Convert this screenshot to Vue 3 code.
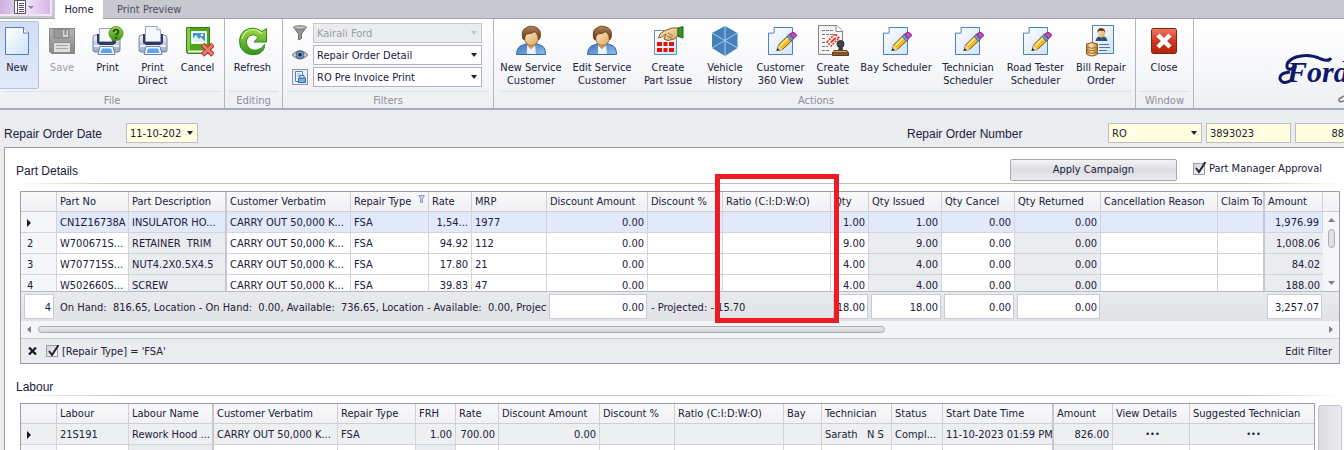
<script setup>
import { ref } from 'vue'

const fileActions = [
  { icon: 'new', lines: ['New'], width: 44, active: true },
  { icon: 'save', lines: ['Save'], width: 46, disabled: true },
  { icon: 'printq', lines: ['Print'], width: 45 },
  { icon: 'print', lines: ['Print', 'Direct'], width: 45 },
  { icon: 'cancel', lines: ['Cancel'], width: 45 },
]
const mainActions = [
  { icon: 'person', lines: ['New Service', 'Customer'], width: 68 },
  { icon: 'person', lines: ['Edit Service', 'Customer'], width: 74 },
  { icon: 'issue', lines: ['Create', 'Part Issue'], width: 58 },
  { icon: 'cube', lines: ['Vehicle', 'History'], width: 56 },
  { icon: 'edit', lines: ['Customer', '360 View'], width: 55 },
  { icon: 'stamp', lines: ['Create', 'Sublet'], width: 50 },
  { icon: 'edit', lines: ['Bay Scheduler'], width: 76 },
  { icon: 'edit', lines: ['Technician', 'Scheduler'], width: 68 },
  { icon: 'edit', lines: ['Road Tester', 'Scheduler'], width: 67 },
  { icon: 'bill', lines: ['Bill Repair', 'Order'], width: 64 },
]
const groups = [
  { name: 'File', cls: 'g-file', actions: fileActions },
  { name: 'Editing', cls: 'g-editing', actions: [{ icon: 'refresh', lines: ['Refresh'], width: 55 }] },
]
const filters = [
  { icon: 'funnel', label: 'Dealer', value: 'Kairali Ford', disabled: true },
  { icon: 'eye', label: 'View', value: 'Repair Order Detail' },
  { icon: 'report', label: 'Report', value: 'RO Pre Invoice Print' },
]

const partCols = [
  { t: '', w: 36 },
  { t: 'Part No', w: 72 },
  { t: 'Part Description', w: 98, fixed: true, ro: true },
  { t: 'Customer Verbatim', w: 124 },
  { t: 'Repair Type', w: 78, filter: true },
  { t: 'Rate', w: 43, num: true },
  { t: 'MRP', w: 75 },
  { t: 'Discount Amount', w: 101, num: true },
  { t: 'Discount %', w: 75 },
  { t: 'Ratio (C:I:D:W:O)', w: 108, mark: true },
  { t: 'Qty', w: 38, num: true },
  { t: 'Qty Issued', w: 73, num: true, ro: true },
  { t: 'Qty Cancel', w: 73, num: true },
  { t: 'Qty Returned', w: 86, num: true, ro: true },
  { t: 'Cancellation Reason', w: 117 },
  { t: 'Claim To', w: 47, fixed: true },
  { t: 'Amount', w: 58, num: true, ro: true },
]
const verb = 'CARRY OUT 50,000 K...'
const partRows = [
  ['', 'CN1Z16738A', 'INSULATOR HO...', verb, 'FSA', '1,54...', '1977', '0.00', '', '', '1.00', '1.00', '0.00', '0.00', '', '', '1,976.99'],
  ['2', 'W700671S...', 'RETAINER  TRIM', verb, 'FSA', '94.92', '112', '0.00', '', '', '9.00', '9.00', '0.00', '0.00', '', '', '1,008.06'],
  ['3', 'W707715S...', 'NUT4.2X0.5X4.5', verb, 'FSA', '17.80', '21', '0.00', '', '', '4.00', '4.00', '0.00', '0.00', '', '', '84.02'],
  ['4', 'W502660S...', 'SCREW', verb, 'FSA', '39.83', '47', '0.00', '', '', '4.00', '4.00', '0.00', '0.00', '', '', '188.00'],
]
const stock = 'On Hand:  816.65, Location - On Hand:  0.00, Available:  736.65, Location - Available:  0.00, Projecte'
const projected = '- Projected: - 15.70'

const labourCols = [
  { t: '', w: 36 },
  { t: 'Labour', w: 72 },
  { t: 'Labour Name', w: 85, fixed: true, ro: true },
  { t: 'Customer Verbatim', w: 124 },
  { t: 'Repair Type', w: 78 },
  { t: 'FRH', w: 40, num: true, ro: true },
  { t: 'Rate', w: 43, num: true },
  { t: 'Discount Amount', w: 101, num: true },
  { t: 'Discount %', w: 75 },
  { t: 'Ratio (C:I:D:W:O)', w: 109 },
  { t: 'Bay', w: 38 },
  { t: 'Technician', w: 70 },
  { t: 'Status', w: 51 },
  { t: 'Start Date Time', w: 111, fixed: true },
  { t: 'Amount', w: 59, num: true, ro: true },
  { t: 'View Details', w: 77, mid: true },
  { t: 'Suggested Technician', w: 124, mid: true },
]
const labourRow = ['', '21S191', 'Rework Hood ...', verb, 'FSA', '1.00', '700.00', '0.00', '', '', '', 'Sarath   N S', 'Compl...', '11-10-2023 01:59 PM', '826.00', '•••', '•••']

const approved = ref(true)
const filterOn = ref(true)
</script>

<template>
  <div class="app">
    <svg class="defs" aria-hidden="true">
      <defs>
        <linearGradient id="gPage" x1="0" y1="0" x2="1" y2="1"><stop offset="0" stop-color="#fff" /><stop offset="1" stop-color="#cfe3f7" /></linearGradient>
        <linearGradient id="gGray" x1="0" y1="0" x2="0" y2="1"><stop offset="0" stop-color="#b4b4b4" /><stop offset="1" stop-color="#888" /></linearGradient>
        <linearGradient id="gPrn" x1="0" y1="0" x2="0" y2="1"><stop offset="0" stop-color="#f4f6fb" /><stop offset="1" stop-color="#9aa6c2" /></linearGradient>
        <linearGradient id="gBlue" x1="0" y1="0" x2="1" y2="1"><stop offset="0" stop-color="#3a6fc0" /><stop offset="1" stop-color="#8fc0ee" /></linearGradient>
        <linearGradient id="gGreen" x1="0" y1="0" x2="0" y2="1"><stop offset="0" stop-color="#a3d94a" /><stop offset="1" stop-color="#2f9417" /></linearGradient>
        <linearGradient id="gRed" x1="0" y1="0" x2="0" y2="1"><stop offset="0" stop-color="#ec7a62" /><stop offset="0.5" stop-color="#cf3a20" /><stop offset="1" stop-color="#b02208" /></linearGradient>
        <linearGradient id="gSkin" x1="0" y1="0" x2="1" y2="1"><stop offset="0" stop-color="#ffe9c0" /><stop offset="1" stop-color="#dba766" /></linearGradient>
        <linearGradient id="gHair" x1="0" y1="0" x2="0" y2="1"><stop offset="0" stop-color="#b08258" /><stop offset="1" stop-color="#5e3514" /></linearGradient>
        <linearGradient id="gGold" x1="0" y1="0" x2="1" y2="0"><stop offset="0" stop-color="#c58a3c" /><stop offset="0.4" stop-color="#ffe6ac" /><stop offset="1" stop-color="#b87a30" /></linearGradient>
      </defs>
      <symbol id="i-new" viewBox="0 0 32 32">
        <path d="M4.500 2.500H22.500L27.500 8V29.500H4.500Z" fill="url(#gPage)" stroke="#4a82bd" />
        <path d="M22.500 2.500V8H27.500" fill="#fff" stroke="#4a82bd" />
      </symbol>
      <symbol id="i-save" viewBox="0 0 32 32">
        <path d="M3.500 3.500H28.500V28.500H5.500L3.500 26.500Z" fill="url(#gGray)" stroke="#858585" />
        <path d="M8 4H23V13H8Z" fill="#999" stroke="#858585" /><path d="M17 5H22V12H17Z" fill="#d6d6d6" /><path d="M18.500 5H20.500V10H18.500Z" fill="#888" />
        <path d="M7.500 17.500H24.500V27.500H7.500Z" fill="#dedede" stroke="#8d8d8d" /><path d="M10 20.500H22M10 23.500H22" stroke="#a5a5a5" />
      </symbol>
      <symbol id="i-print" viewBox="0 0 32 32">
        <path d="M2 13Q2 10 5 10H27Q30 10 30 13V25Q30 27 28 27H4Q2 27 2 25Z" fill="url(#gPrn)" stroke="#7a86a8" />
        <path d="M6 9H26V18L23 20H9L6 18Z" fill="#33395c" />
        <path d="M8.500 1.500H20L23.500 5V16.500H8.500Z" fill="#f6f8fd" stroke="#9aa5be" /><path d="M20 1.500V5H23.500" fill="#fff" stroke="#9aa5be" />
        <path d="M3 20H29V22H3Z" fill="#fff" opacity="0.7" />
        <path d="M9 21.500H23L25 29.500H7Z" fill="#f2f7ff" stroke="#6e80ad" /><path d="M11 23.500H21L22.500 28H9.500Z" fill="#59a4e8" />
      </symbol>
      <symbol id="i-printq" viewBox="0 0 32 32">
        <path d="M1 13Q1 10 4 10H25Q28 10 28 13V25Q28 27 26 27H3Q1 27 1 25Z" fill="url(#gPrn)" stroke="#7a86a8" />
        <path d="M5 9H24V18L21 20H8L5 18Z" fill="#33395c" /><path d="M7.500 3.500H20V16.500H7.500Z" fill="#f6f8fd" stroke="#9aa5be" />
        <path d="M2 20H27V22H2Z" fill="#fff" opacity="0.7" />
        <path d="M8 21.500H21L23 29.500H6Z" fill="#f2f7ff" stroke="#6e80ad" /><path d="M10 23.500H19L20.500 28H8.500Z" fill="#59a4e8" />
        <circle cx="24" cy="8.500" r="7" fill="url(#gGreen)" stroke="#5e9c1c" />
        <path d="M21.500 7Q21.500 4.500 24 4.500T26.500 7Q26.500 8.300 24.300 9.200V10.500M24.300 12V13.500" fill="none" stroke="#24450c" stroke-width="1.700" />
      </symbol>
      <symbol id="i-cancel" viewBox="0 0 32 32">
        <path d="M4.500 2.500H27.500V28.500H6.500Q4.500 28.500 4.500 26.500Z" fill="#4ea51e" stroke="#347d10" /><path d="M5 3H8V25H5Z" fill="#87cb4f" /><path d="M6 25.500H25V27.500H6Z" fill="#f3f7ee" />
        <path d="M9.500 6.500H24.500V18.500H9.500Z" fill="#fff" stroke="#e7f5df" /><path d="M11 8H23V17H11Z" fill="#3e91d3" /><path d="M11 17V13L14 10L17 14L19 12L23 17Z" fill="#dff0f8" /><circle cx="20" cy="10" r="1.300" fill="#fff" />
        <path d="M20.500 19.500L31 30M31 19.500L20.500 30" stroke="#b5352c" stroke-width="5" /><path d="M21 20L30.500 29.500M30.500 20L21 29.500" stroke="#ea7d72" stroke-width="2.500" />
      </symbol>
      <symbol id="i-refresh" viewBox="0 0 32 32">
        <path d="M25 6.500L29.500 3.500V17H17L21 12.500Q17 8 12.500 11Q8 14.500 10 20Q13 26.500 20 25Q25 24 27.500 19.500Q28 27 19.500 29.500Q8 31 3.500 22Q.500 12 7 6Q16 0 25 6.500Z" fill="url(#gGreen)" stroke="#2c8a14" />
        <path d="M5 14Q7 5 16 4.500Q21 4.500 25 8.500" fill="none" stroke="#cdf08d" stroke-width="1.200" />
      </symbol>
      <symbol id="i-person" viewBox="0 0 32 32">
        <path d="M1.500 29.500Q2 21 8 20L13 18H20L25 20Q30.500 21 30.500 29.500Z" fill="url(#gBlue)" stroke="#3968ab" />
        <path d="M12 20L16 24L20 20L21 29H12Z" fill="#eef3fa" /><path d="M12.500 17H19.500V21L16 24L12.500 21Z" fill="#d49c59" />
        <ellipse cx="16.500" cy="12.500" rx="7" ry="8" fill="url(#gSkin)" stroke="#a87237" />
        <path d="M8 14Q5.500 5 11 3Q14 0 20 2Q27 4 25 13L23.500 15Q24 10 20 6.500Q16 9 11.500 9Q9.500 11 9.500 15Z" fill="url(#gHair)" stroke="#6f4524" />
      </symbol>
      <symbol id="i-issue" viewBox="0 0 32 32">
        <path d="M2.500 5.500H24.500V29.500H2.500Z" fill="url(#gPage)" stroke="#5d91c4" />
        <g fill="#e0140e"><path d="M5 17h5v4h-5zM11.500 17h4v4h-4zM17 17h5v4h-5zM5 23h5v4h-5zM11.500 23h4v4h-4zM17 23h5v4h-5z" /></g>
        <path d="M26 3L20 3Q12 5 8 9L6.500 13L10 12L14 9L12 14L16 15.500L22 14L26 11Z" fill="url(#gSkin)" stroke="#8c5a2b" /><path d="M15 11L20 13M16 8L21 11" stroke="#9e6b35" />
        <path d="M26 3L31 1.500V13L26 11.500Z" fill="#37922b" stroke="#246b1b" />
      </symbol>
      <symbol id="i-cube" viewBox="0 0 32 32">
        <path d="M16 1L28.500 8V23L16 31L3 23V8Z" fill="#467fb9" /><path d="M16 1V31M3 8L28.500 23M28.500 8L3 23" stroke="#a8d0f2" />
      </symbol>
      <symbol id="i-edit" viewBox="0 0 32 32">
        <path d="M9 2.500H27.500V29.500H3.500V8H9Z" fill="url(#gPage)" stroke="#4a82bd" /><path d="M9 2.500V8H3.500" fill="#fff" stroke="#78a6d2" />
        <path d="M12 25.500L13.500 20L24 9.500L28.500 14L17.500 24.500Z" fill="#f6bd20" stroke="#705028" /><path d="M15.500 20.500L25 11" stroke="#fff0a0" stroke-width="1.500" />
        <path d="M12 25.500L13.500 20L17.500 24.500Z" fill="#e8d2ad" /><path d="M11.500 26L12.500 23L14.500 25Z" fill="#222" />
        <path d="M22 11.500L24 9.500L28.500 14L26 16.200Z" fill="#6c94c4" stroke="#415d88" stroke-width="0.700" /><path d="M24.500 9Q28 6 30.500 8.500T28.500 13.500Z" fill="#c04bc4" stroke="#7d2485" />
      </symbol>
      <symbol id="i-stamp" viewBox="0 0 32 32">
        <path d="M1.500.500H20L25.500 6V29.500H1.500Z" fill="#f5f5f5" stroke="#858585" /><path d="M19 .500V6.500H25.500" fill="#fff" stroke="#858585" />
        <path d="M5 5.500H16M5 9.500H20M5 13.500H9M5 17.500H9M5 21.500H11M5 25.500H13" stroke="#777" stroke-dasharray="3 1" />
        <path d="M10 17L18 9L22 13L14 21Z" fill="#fff" stroke="#e02a20" stroke-dasharray="2 1" stroke-width="1.500" /><path d="M13 17L18 12L19.500 13.500L14.500 18Z" fill="#d9362d" />
        <circle cx="23.500" cy="19" r="3.500" fill="#424449" stroke="#25272b" /><path d="M22 22H25L26 25H21Z" fill="#383a3e" />
        <path d="M17 25.500H30L31.500 28H15.500Z" fill="#cfa371" stroke="#6b441e" /><path d="M15.500 28H31.500V30.500H15.500Z" fill="#926132" stroke="#5c3816" />
      </symbol>
      <symbol id="i-bill" viewBox="0 0 32 32">
        <path d="M7.500.500H28.500V28.500H7.500Z" fill="url(#gPage)" stroke="#527daf" />
        <path d="M10.500 16Q11 12 15 11H18Q22 12 22.500 16Z" fill="#334e86" /><ellipse cx="16.500" cy="8" rx="3.500" ry="4.500" fill="url(#gSkin)" /><path d="M12.500 8Q12 3 16 3T20.500 8L19 6H14Z" fill="#70451f" />
        <path d="M14 19.500H24M14 22.500H25M14 25.500H22" stroke="#4d75a7" />
        <path d="M1.500 19Q7 16 12.500 19V29Q7 33 1.500 29Z" fill="url(#gGold)" stroke="#895320" /><path d="M1.500 21.500Q7 25 12.500 21.500M1.500 24Q7 27.500 12.500 24M1.500 26.500Q7 30 12.500 26.500" fill="none" stroke="#9c672b" />
      </symbol>
      <symbol id="i-close" viewBox="0 0 32 32">
        <rect x="3.500" y="3.500" width="25" height="25" rx="2" fill="url(#gRed)" stroke="#842111" />
        <path d="M10 10L22 22M22 10L10 22" stroke="#fff" stroke-width="4.500" />
      </symbol>
      <symbol id="i-funnel" viewBox="0 0 16 16">
        <path d="M1.500 2L6.500 9V15L9.500 13.500V9L14.500 2Z" fill="#949494" stroke="#707070" /><ellipse cx="8" cy="2.500" rx="6.500" ry="1.800" fill="#c4c4c4" stroke="#777" />
      </symbol>
      <symbol id="i-eye" viewBox="0 0 16 16">
        <path d="M.500 8Q8 0 15.500 8Q8 15.500.500 8Z" fill="#f4f4f6" stroke="#8b8b90" stroke-width="1.300" /><circle cx="8" cy="7.800" r="4" fill="#6f9cc6" stroke="#42648a" /><circle cx="8" cy="7.800" r="1.800" fill="#1b2738" />
      </symbol>
      <symbol id="i-report" viewBox="0 0 16 16">
        <rect x="0.500" y="0.500" width="15" height="15" fill="#e9eff6" stroke="#8b97a8" /><path d="M3.500 2.500H10.500V7M3.500 2.500V12.500H6" fill="#fff" stroke="#4b82bc" /><path d="M5 5H9M5 7H8" stroke="#7fa9d3" />
        <path d="M6.500 9H13.500V13.500H6.500Z" fill="#78b0e4" stroke="#376ba4" /><path d="M8 6.500H12V9H8Z" fill="#fff" stroke="#376ba4" />
      </symbol>
    </svg>

    <nav class="tabs">
      <button class="appmenu" aria-label="Application menu">
        <svg width="22" height="14" viewBox="0 0 22 14"><path d="M1.500.500H12.500V13.500H1.500ZM4.500 0V14" fill="#fff" stroke="#5c5564" /><path d="M6 3.500H11M6 5.500H11M6 7.500H11M6 9.500H11M6 11.500H11" stroke="#5c5564" /><path d="M15 6H21L18 9Z" fill="#8c8098" /></svg>
      </button>
      <button class="tab on">Home</button>
      <button class="tab">Print Preview</button>
    </nav>

    <header class="ribbon">
      <section v-for="g in groups" :key="g.name" class="group" :class="g.cls">
        <div class="actions">
          <button v-for="a in g.actions" :key="a.icon" class="act" :class="{ active: a.active }" :disabled="a.disabled" :style="{ width: a.width + 'px' }">
            <svg width="32" height="32"><use :href="'#i-' + a.icon" /></svg>
            <span v-for="l in a.lines" :key="l">{{ l }}</span>
          </button>
        </div>
        <h2>{{ g.name }}</h2>
      </section>
      <section class="group g-filters">
        <div class="filters">
          <label v-for="f in filters" :key="f.icon" class="frow">
            <svg width="16" height="16"><use :href="'#i-' + f.icon" /></svg>
            <span class="sel"><select :disabled="f.disabled" :aria-label="f.label"><option>{{ f.value }}</option></select></span>
          </label>
        </div>
        <h2>Filters</h2>
      </section>
      <section class="group g-actions">
        <div class="actions">
          <button v-for="a in mainActions" :key="a.lines.join()" class="act" :style="{ width: a.width + 'px' }">
            <svg width="32" height="32"><use :href="'#i-' + a.icon" /></svg>
            <span v-for="l in a.lines" :key="l">{{ l }}</span>
          </button>
        </div>
        <h2>Actions</h2>
      </section>
      <section class="group g-window">
        <div class="actions">
          <button class="act"><svg width="32" height="32"><use href="#i-close" /></svg><span>Close</span></button>
        </div>
        <h2>Window</h2>
      </section>
      <div class="brand">
        <svg width="66" height="60" viewBox="0 0 66 60" role="img" aria-label="Ford">
          <path d="M53 10Q51 14 43 11Q31 5 18 9Q8 13 9 19Q11 24 18 18" fill="none" stroke="#10186a" stroke-width="3" />
          <path d="M12 24Q1 25 2 31Q5 38 15 31" fill="none" stroke="#10186a" stroke-width="3" />
          <text x="9" y="34" class="script">Ford</text>
          <path d="M66 48L61 51Q60 55 66 53" fill="none" stroke="#777" stroke-width="1.500" />
        </svg>
      </div>
    </header>

    <form class="fields" @submit.prevent>
      <label for="rod">Repair Order Date</label>
      <span class="sel yellow date"><select id="rod"><option>11-10-2023</option></select></span>
      <label for="ron" class="push">Repair Order Number</label>
      <span class="sel yellow ro"><select id="ron"><option>RO</option></select></span>
      <input class="num1" aria-label="Order number" value="3893023">
      <input class="num2" aria-label="Order suffix" value="88">
    </form>

    <main class="panel">
      <div class="head parts-head">
        <h3>Part Details</h3>
        <button class="campaign">Apply Campaign</button>
        <label class="check"><input v-model="approved" type="checkbox"><svg width="14" height="14" viewBox="0 0 14 14"><path d="M3 6L6 10L12.500 0" /></svg>Part Manager Approval</label>
      </div>
      <div class="grid">
        <table>
          <colgroup><col v-for="c in partCols" :key="c.t" :style="{ width: c.w + 'px' }"><col class="c-scroll"></colgroup>
          <thead>
            <tr>
              <th v-for="c in partCols" :key="c.t" :class="{ fixed: c.fixed, marked: c.mark }">
                <div>{{ c.t }}<svg v-if="c.filter" class="fi" width="7" height="8" viewBox="0 0 7 8"><path d="M.500.500H6.500L4.500 3.500V7.500H2.500V3.500Z" fill="#c5d2e8" stroke="#8f9fbe" /></svg></div>
                <span v-if="c.mark" class="marker"></span>
              </th>
              <th class="last"></th>
            </tr>
          </thead>
          <tbody>
            <tr v-for="(r, i) in partRows" :key="i" :class="{ sel1: i === 0, clip: i === 3 }">
              <td v-for="(v, j) in r" :key="j" :class="{ idx: j === 0, fixed: partCols[j].fixed, num: partCols[j].num, ro: partCols[j].ro }">
                <div><svg v-if="i === 0 && j === 0" width="4" height="8" viewBox="0 0 4 8"><path d="M0 0L4 4L0 8Z" fill="#15152d" /></svg>{{ v }}</div>
              </td>
              <td v-if="i === 0" rowspan="4" class="vs">
                <div class="vscroll">
                  <svg width="7" height="4" viewBox="0 0 7 4"><path d="M0 4L3.500 0L7 4Z" fill="#7d7f8b" /></svg>
                  <i></i>
                  <svg width="7" height="4" viewBox="0 0 7 4"><path d="M0 0L3.500 4L7 0Z" fill="#7d7f8b" /></svg>
                </div>
              </td>
            </tr>
          </tbody>
          <tfoot>
            <tr>
              <td><span class="box">4</span></td>
              <td colspan="6"><div class="sum">{{ stock }}</div></td>
              <td><span class="box">0.00</span></td>
              <td colspan="2"><div class="sum">{{ projected }}</div></td>
              <td><span class="box">18.00</span></td>
              <td><span class="box">18.00</span></td>
              <td><span class="box">0.00</span></td>
              <td><span class="box">0.00</span></td>
              <td colspan="2"></td>
              <td><span class="box">3,257.07</span></td>
              <td></td>
            </tr>
          </tfoot>
        </table>
        <div class="hscroll">
          <svg width="4" height="7" viewBox="0 0 4 7"><path d="M4 0L0 3.500L4 7Z" fill="#7d7f8b" /></svg>
          <div class="track"><i></i></div>
          <svg width="4" height="7" viewBox="0 0 4 7"><path d="M0 0L4 3.500L0 7Z" fill="#7d7f8b" /></svg>
        </div>
        <div class="filterbar">
          <button class="x" aria-label="Clear filter"><svg width="9" height="8" viewBox="0 0 9 8"><path d="M1 .500L8 7.500M8 .500L1 7.500" stroke="#15152d" stroke-width="2.200" /></svg></button>
          <label class="check"><input v-model="filterOn" type="checkbox"><svg width="14" height="14" viewBox="0 0 14 14"><path d="M3 6L6 10L12.500 0" /></svg>[Repair Type] = 'FSA'</label>
          <button class="edit">Edit Filter</button>
        </div>
      </div>

      <div class="head labour-head"><h3>Labour</h3></div>
      <div class="labour">
        <div class="grid">
          <table>
            <colgroup><col v-for="c in labourCols" :key="c.t" :style="{ width: c.w + 'px' }"></colgroup>
            <thead>
              <tr><th v-for="c in labourCols" :key="c.t" :class="{ fixed: c.fixed }"><div>{{ c.t }}</div></th></tr>
            </thead>
            <tbody>
              <tr class="lab1">
                <td v-for="(v, j) in labourRow" :key="j" :class="{ idx: j === 0, fixed: labourCols[j].fixed, num: labourCols[j].num, mid: labourCols[j].mid }">
                  <div><svg v-if="j === 0" width="4" height="8" viewBox="0 0 4 8"><path d="M0 0L4 4L0 8Z" fill="#15152d" /></svg>{{ v }}</div>
                </td>
              </tr>
              <tr>
                <td v-for="(c, j) in labourCols" :key="j" :class="{ idx: j === 0, fixed: c.fixed, ro: c.ro }"><div></div></td>
              </tr>
            </tbody>
          </table>
        </div>
        <div class="sidebar"></div>
      </div>
    </main>
  </div>
</template>

<style>
body { margin: 0; overflow: hidden; }
</style>

<style scoped>
* { box-sizing: border-box; }
.app { height: 100vh; overflow: hidden; background: #ebecf0; color: #20203a; font: 11px/13px "DejaVu Sans Condensed", Tahoma, "Noto Sans", sans-serif; }
button, input, select { font: inherit; color: inherit; margin: 0; border-radius: 0; }
button { border: 0; background: none; padding: 0; }
svg { display: block; flex: none; }
.defs { position: absolute; width: 0; height: 0; }

.tabs { display: flex; height: 19px; background: #c8c8d1; border-bottom: 1px solid #a2a4b0; }
.appmenu { width: 52px; height: 16px; padding: 0 0 2px 13px; background: linear-gradient(90deg, #cdb0de, #f0e2f6 55%, #d7b5e4); border: solid #f1e7f6; border-width: 0 2px 2px 0; }
.tab { height: 19px; padding: 0 14px; color: #4c4c60; line-height: 18px; }
.tab.on { width: 48px; margin-left: 3px; padding: 0; background: #fff; color: #20203a; }

.ribbon { display: flex; height: 91px; background: linear-gradient(#fff, #f7f8fa 50%, #eeeff3); border-bottom: 2px solid #a9acb6; }
.group { display: flex; flex-direction: column; justify-content: space-between; border-right: 1px solid #b4b6c0; }
.group h2 { margin: 0 4px; height: 17px; line-height: 18px; font-size: 11px; font-weight: normal; text-align: center; color: #8c8e99; border-top: 1px solid #dcdde2; }
.g-file { width: 225px; }
.g-editing { width: 58px; }
.g-filters { width: 211px; }
.g-actions { width: 642px; padding-left: 3px; }
.g-window { width: 58px; }
.g-file .actions { margin-left: -5px; }
.actions { display: flex; padding-top: 2px; }
.act { display: flex; flex-direction: column; align-items: center; height: 68px; padding-top: 3px; border: 1px solid transparent; white-space: nowrap; }
.g-window .act { width: 56px; }
.act svg { margin-bottom: 4px; }
.act.active { background: linear-gradient(#d2dcf3, #e2eafb); border-color: #b9c2d8; border-radius: 2px; }
.act:disabled { color: #a0a1aa; }
.filters { display: flex; flex-direction: column; gap: 2px; padding: 4px 11px 0 9px; }
.frow { display: flex; align-items: center; gap: 5px; }
.frow .sel { flex: 1; }
.sel { position: relative; display: block; height: 20px; }
.sel select { appearance: none; width: 100%; height: 20px; padding: 0 16px 0 3px; border: 1px solid #b0b3be; background: #fff; outline: 0; opacity: 1; }
.sel::after { content: ""; position: absolute; right: 5px; top: 8px; border: solid transparent; border-width: 4px 3px 0; border-top-color: #20203a; }
.sel select:disabled { background: #ebecf0; color: #9b9ca5; border-color: #c3c5ce; }
.sel:has(select:disabled)::after { border-top-color: #c3c4cc; }
.brand { flex: 1; display: flex; justify-content: flex-end; align-items: flex-end; overflow: hidden; }
.script { font: italic bold 30px "Liberation Serif", serif; fill: #10186a; }

.fields { display: flex; align-items: center; height: 37px; padding: 13px 0 4px 4px; overflow: hidden; }
.fields label { font: 12px/16px "Liberation Sans", Arial, sans-serif; white-space: nowrap; padding-top: 2px; }
.fields label:first-child { width: 122px; }
.fields .push { margin-left: auto; width: 201px; }
.yellow select, .fields input { background: #ffffdf; border: 1px solid #bcbdc6; height: 20px; }
.date { width: 72px; }
.ro { width: 94px; }
.fields input { padding: 0 3px; margin-left: 4px; outline: 0; }
.num1 { width: 85px; }
.fields .num2 { width: 49px; text-align: right; border-right: 0; padding-right: 0; }

.panel { background: #fff; border: solid #9c9ea8; border-width: 1px 0 0 1px; margin-left: 4px; padding: 0 4px 0 15px; }
.head { display: flex; align-items: center; margin: 0 0 7px -4px; border-bottom: 1px solid; border-image: linear-gradient(90deg, #fff, #c0c1cb 8%, #c0c1cb 93%, #fff) 1; }
.head h3 { margin: 0; font: 12px/16px "Liberation Sans", Arial, sans-serif; }
.parts-head { height: 36px; padding: 11px 18px 1px 0; }
.labour-head { height: 32px; padding-top: 14px; }
.campaign { width: 167px; height: 22px; margin: 0 16px 2px auto; border: 1px solid #a4a6b2; border-radius: 2px; background: linear-gradient(#f3f3f6, #dcdde3 50%, #eaeaee); }
.check { position: relative; display: flex; align-items: center; gap: 4px; white-space: nowrap; }
.parts-head .check { margin-bottom: 4px; }
.check input { appearance: none; width: 12px; height: 12px; border: 1px solid #9b9da9; background: linear-gradient(135deg, #d0d1d8, #f8f8fa); }
.check svg { position: absolute; left: 0; top: 0; fill: none; stroke: #252538; stroke-width: 2; pointer-events: none; }

.grid { border: 1px solid #9c9fab; background: #fff; }
table { width: 100%; table-layout: fixed; border-collapse: separate; border-spacing: 0; }
.c-scroll { width: 16px; }
th, td { padding: 0; font-weight: normal; text-align: left; border-right: 1px solid #d2d3db; border-bottom: 1px solid #d2d3db; }
th { background: linear-gradient(#f9f9fa, #f0f1f3); border-color: #cdced6; }
th div, td div { height: 20px; line-height: 21px; padding: 0 0 0 3px; white-space: pre; overflow: hidden; }
th div { display: flex; height: 19px; line-height: 19px; }
th.fixed, td.fixed { border-right: 2px solid #c6c7d2; }
th.last, .vs { border-right: 0; }
th:last-child, td:last-child { border-right: 0; }
.fi { margin: 3px 3px 0 auto; }
.num div { text-align: right; padding: 0 3px 0 0; }
.mid div { text-align: center; font-size: 9px; }
.ro, .idx { background: #ebecf0; }
.idx { background: #f5f6f9; }
.idx div { padding-left: 6px; }
.idx svg { margin-top: 7px; }
.sel1 td { background: #e1e9fb; }
.sel1 td.idx, .sel1 td.vs { background: #f5f6f9; }
.clip td div { height: 16px; }
.clip td, .vs { border-bottom-color: #b7b9c4; }
.lab1 td { background: #eeeff1; }
.vs { vertical-align: top; }
td .vscroll { display: flex; flex-direction: column; align-items: center; height: 79px; padding: 6px 0; }
.vscroll i { width: 7px; height: 19px; margin: 7px 0 auto; border: 1px solid #a9abb6; border-radius: 4px; background: #dfe0e6; }
tfoot td { height: 29px; border: 0; background: linear-gradient(#e9eaed, #e2e3e6); }
.box { display: block; height: 25px; margin: 0 1px 0 2px; padding-right: 2px; border: 1px solid #c9cad3; background: #fff; line-height: 25px; text-align: right; }
tfoot td:first-child .box { margin: 0 3px; }
.marked { position: relative; }
.marker { position: absolute; left: -8px; top: -18px; width: 124px; height: 149px; border: 5px solid #ed1c24; z-index: 2; }
.hscroll { display: flex; align-items: center; gap: 7px; height: 17px; padding: 0 6px; background: #f4f5f7; }
.track { flex: 1; }
.track i { display: block; width: 66%; height: 7px; border: 1px solid #a9abb6; border-radius: 4px; background: linear-gradient(#e9eaee, #d4d5dc); }
.filterbar { display: flex; align-items: center; height: 25px; padding: 0 7px; background: #ebecf0; border-top: 1px solid #c6c7d0; }
.x { width: 18px; }
.edit { margin-left: auto; }

.labour { display: flex; gap: 3px; margin-right: -2px; }
.labour .grid { flex: 1; min-width: 0; }
.sidebar { width: 24px; margin-top: 2px; border: 1px solid #c2c3cb; border-radius: 3px; background: linear-gradient(90deg, #dcdde3, #ebecf0); }
</style>
